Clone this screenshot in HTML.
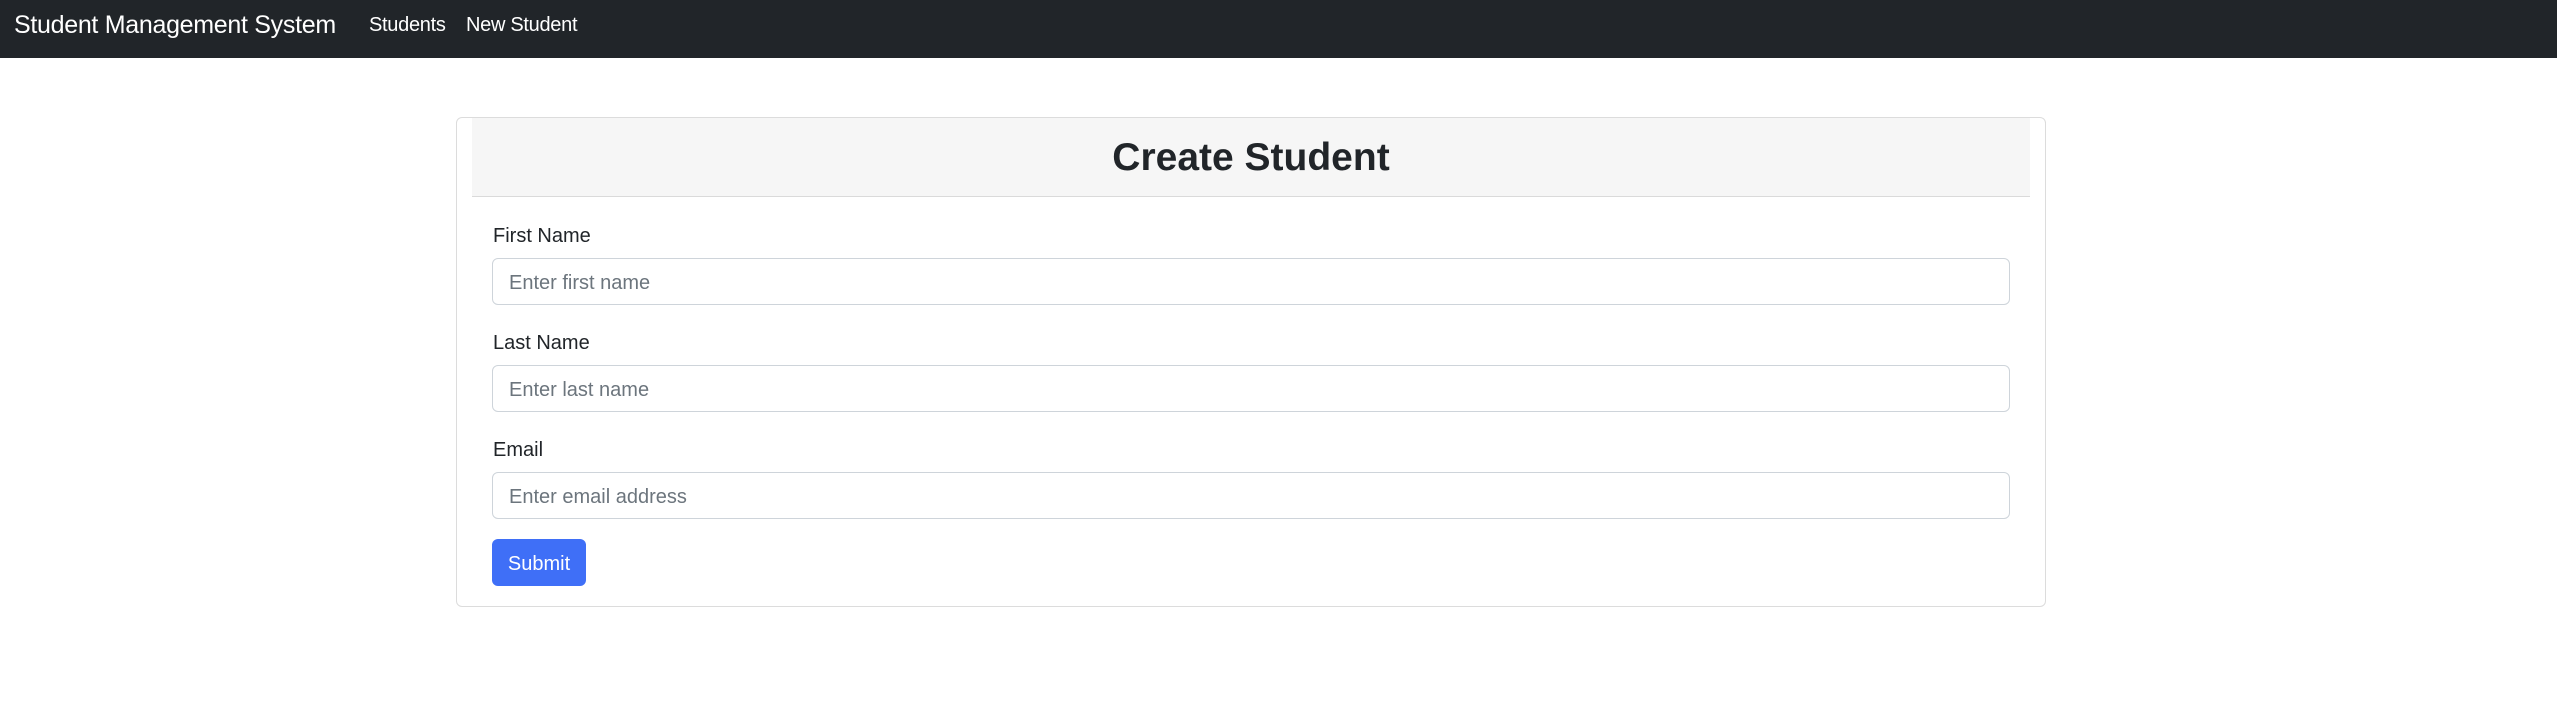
<!DOCTYPE html>
<html><head><meta charset="utf-8"><style>
body{margin:0;width:2557px;height:707px;background:#fff;font-family:"Liberation Sans",sans-serif;color:#212529;position:relative;overflow:hidden}
.nav{position:absolute;left:0;top:0;width:2557px;height:58px;background:#212529}
.brand{position:absolute;left:14px;top:11px;font-size:25px;color:#fff;white-space:nowrap;letter-spacing:-0.3px}
.link{position:absolute;top:14px;font-size:20px;color:#fff;white-space:nowrap;letter-spacing:-0.3px}
.card{position:absolute;left:456px;top:117px;width:1590px;height:490px;border:1.5px solid #dcdcdc;border-radius:6px;box-sizing:border-box}
.hdr{position:absolute;left:472px;top:118px;width:1558px;height:78px;background:#f6f6f6;border-bottom:1.5px solid #dadada}
.hdr h2{margin:0;text-align:center;font-size:39px;font-weight:bold;line-height:80px;color:#212529}
.lbl{position:absolute;left:493px;font-size:20px;color:#212529}
.inp{position:absolute;left:492px;width:1518px;height:47px;border:1.5px solid #ced4da;border-radius:6px;box-sizing:border-box;font-size:20px;color:#6c757d;padding-left:16px;line-height:48px}
.btn{position:absolute;left:492px;top:539px;width:94px;height:47px;background:#3f6ff7;border-radius:6px;color:#fff;font-size:20px;text-align:center;line-height:50px}
</style></head><body>
<div class="nav">
<div class="brand">Student Management System</div>
<div class="link" style="left:369px">Students</div>
<div class="link" style="left:466px">New Student</div>
</div>
<div class="card"></div>
<div class="hdr"><h2>Create Student</h2></div>
<div class="lbl" style="top:225px">First Name</div>
<div class="inp" style="top:258px">Enter first name</div>
<div class="lbl" style="top:332px">Last Name</div>
<div class="inp" style="top:365px">Enter last name</div>
<div class="lbl" style="top:439px">Email</div>
<div class="inp" style="top:472px">Enter email address</div>
<div class="btn">Submit</div>
</body></html>
